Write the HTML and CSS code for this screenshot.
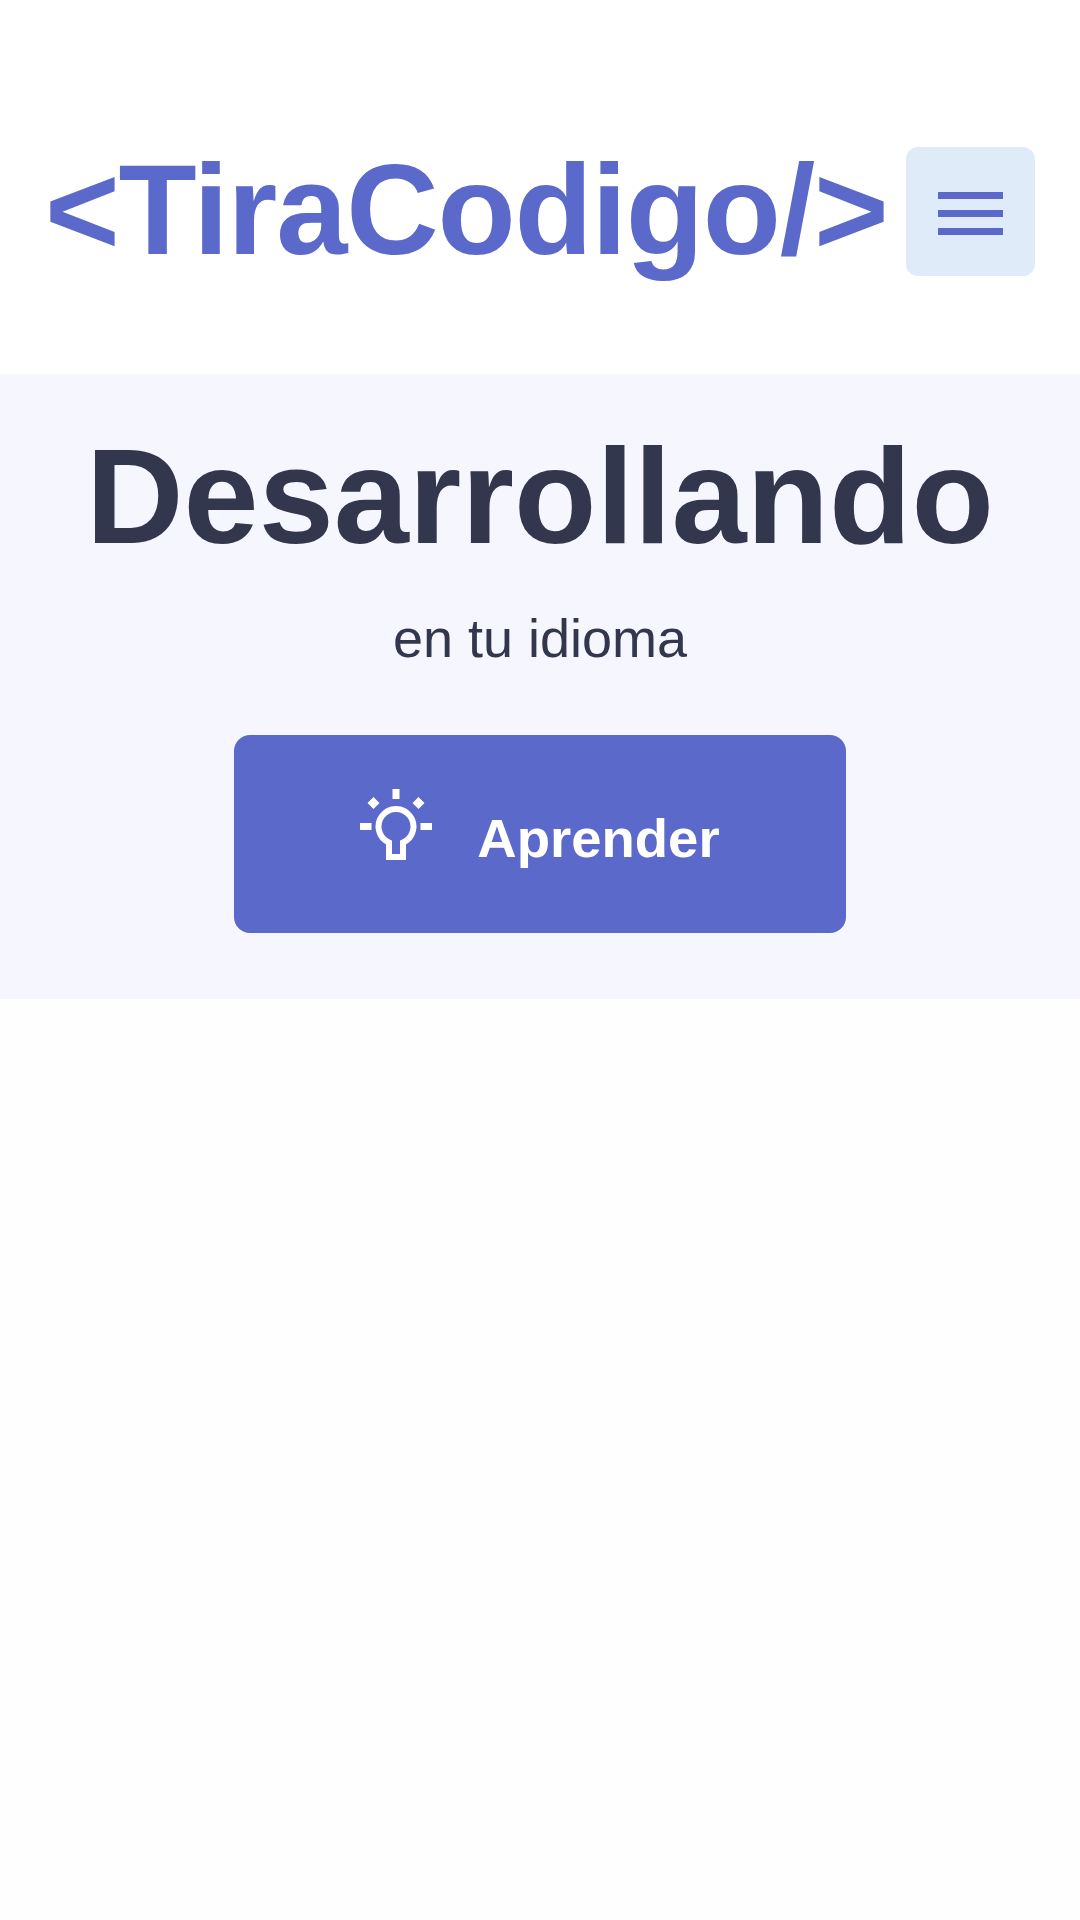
FILE: index.html
```html
<!DOCTYPE html>
<html lang="es">
    <head>
        <meta name="viewport" content="width=device-width, initial-scale=1.0">
        <meta charset="utf-8" />
        <title>TiraCodigo</title>
        <link rel="stylesheet" href="styles.css">
    </head>
    <body>
        <header class="topbar">
            <a class="logo">&lt;TiraCodigo/&gt;</a>
            <button class="menubtn" aria-label="Menu">
                <span class="menuline"></span>
                <span class="menuline"></span>
                <span class="menuline"></span>
            </button>
        </header>

        <section class="hero">
            <h1 class="herotitle">Desarrollando</h1>
            <p class="herosub">en tu idioma</p>
            <a class="learnbtn">
                <svg class="learnicon" width="72" height="72" viewBox="0 0 72 72" aria-hidden="true">
                    <path d="M32.500 0h7v10h-7zM0 34h11.500v7H0zM60.500 34H72v7H60.500z" fill="#fff"/>
                    <path d="M7.500 14l6-6 6 6-6 6zM52.500 14l6-6 6 6-6 6z" fill="#fff"/>
                    <path d="M29 68V53.500A17.500 17.500 0 1 1 43 53.500V68z" fill="none" stroke="#fff" stroke-width="6"/>
                </svg>
                <span class="learntext">Aprender</span>
            </a>
        </section>
    </body>
</html>
```

FILE: styles.css
```css
*
{
    box-sizing: border-box;
}

body
{
    font-family: "Liberation Sans", Arial, sans-serif;
    margin: 0;
    min-height: 1920px;
    background-color: #fefefe;
}

.topbar
{
    height: 374px;
    padding: 49px 45px 0 45px;
    display: flex;
    align-items: center;
    justify-content: space-between;
    background-color: #ffffff;
}

.logo
{
    font-size: 128px;
    font-weight: bold;
    line-height: 1;
    margin-top: -3px;
    color: #5b69cb;
    white-space: nowrap;
    letter-spacing: -1.2px;
}

.menubtn
{
    width: 129px;
    height: 129px;
    flex: none;
    padding: 4px 0 0 0;
    border: none;
    border-radius: 12px;
    background-color: #e0ebf9;
    display: flex;
    flex-direction: column;
    align-items: center;
    justify-content: center;
    gap: 11px;
}

.menuline
{
    display: block;
    width: 65px;
    height: 7px;
    background-color: #5b69cb;
}

.hero
{
    height: 625px;
    padding-top: 55px;
    display: flex;
    flex-direction: column;
    align-items: center;
    background-color: #f6f7fe;
    color: #33374d;
}

.herotitle
{
    margin: 0;
    font-size: 135px;
    font-weight: bold;
    line-height: 1;
}

.herosub
{
    margin: 47px 0 0 0;
    font-size: 54px;
    line-height: 1;
}

.learnbtn
{
    width: 612px;
    height: 198px;
    margin-top: 70px;
    border-radius: 16px;
    display: flex;
    align-items: center;
    justify-content: center;
    gap: 45px;
    background-color: #5b69cb;
    color: #ffffff;
}

.learnicon
{
    flex: none;
    margin-top: -18px;
}

.learntext
{
    font-size: 54.500px;
    font-weight: bold;
    margin-top: 8px;
}
```
